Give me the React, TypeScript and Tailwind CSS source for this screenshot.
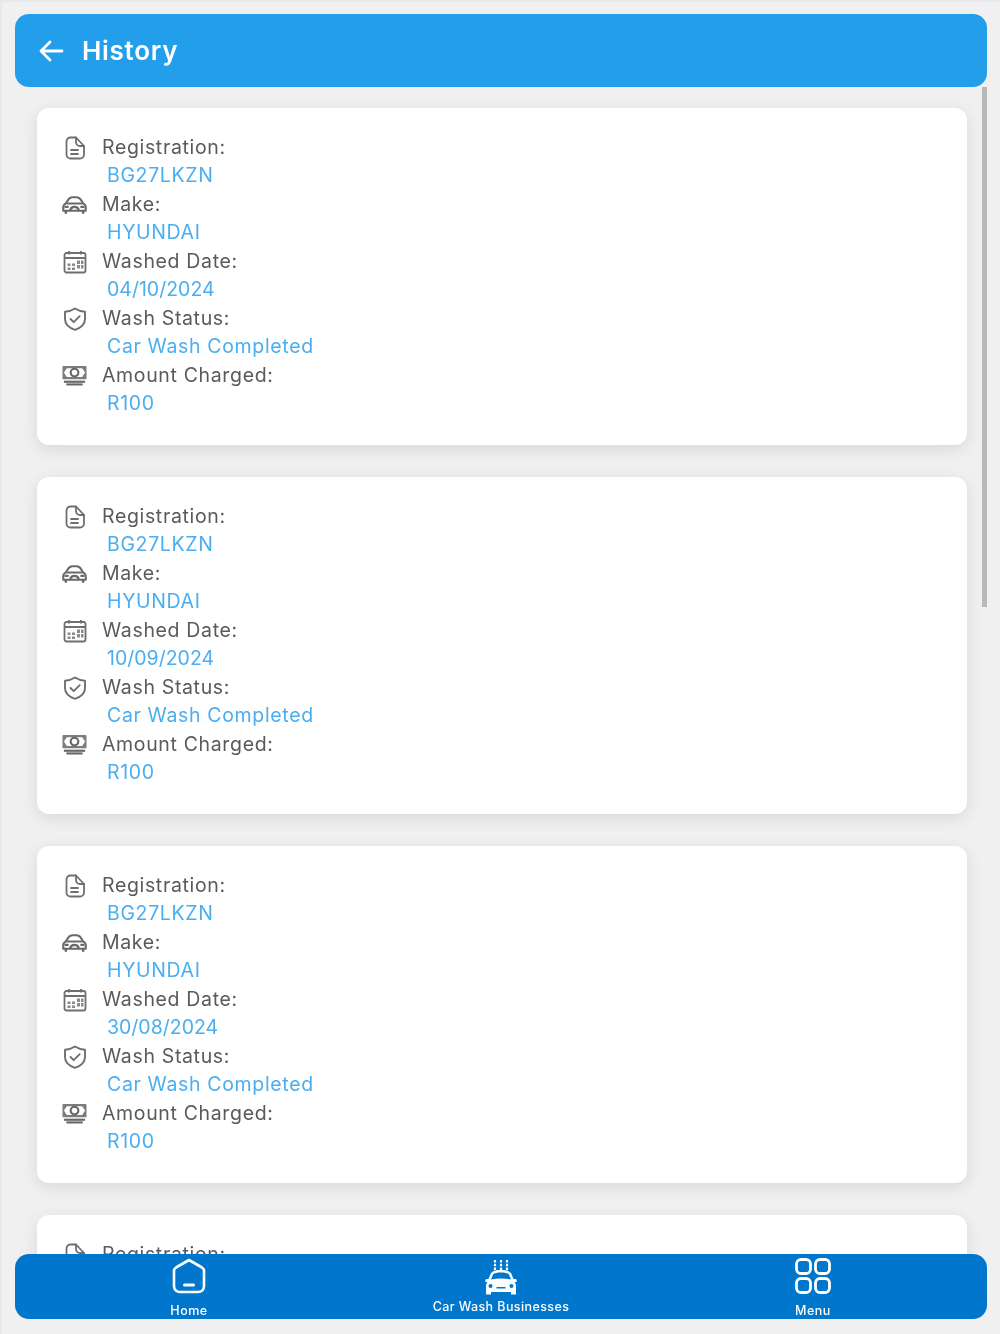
import { ReactNode } from "react";

const font = "font-['Inter','Liberation_Sans',sans-serif]";

function DocIcon() {
  return (
    <svg width="22" height="24" viewBox="0 0 22 24" fill="none" stroke="#6f6f6f" strokeWidth="1.8" strokeLinejoin="round" strokeLinecap="round">
      <path d="M6.500 1.500h5.500l8 8.500v8.500a4 4 0 0 1-4 4h-9.500a4 4 0 0 1-4-4v-13a4 4 0 0 1 4-4z" />
      <path d="M12 1.500v4.500a4 4 0 0 0 4 4h4" />
      <path d="M7 14h7M7 18h7" />
    </svg>
  );
}

function CarIcon() {
  return (
    <svg width="26" height="18" viewBox="0 0 26 18" fill="none" stroke="#6a6a6a" strokeWidth="2.200" strokeLinejoin="round" strokeLinecap="round">
      <path d="M2.500 8.500c1.500-.8 2.300-2 3-3.500 1.200-2.500 3-3.800 5-4h5c2 .2 3.800 1.500 5 4 .7 1.500 1.500 2.700 3 3.500 .8.600 1.200 1.500 1.200 2.800v3.700h-23.400v-3.700c0-1.300.4-2.200 1.200-2.800z" />
      <path d="M5.500 7.500h15" />
      <path d="M8.500 14.500c.5-2.200 2-3.500 4.500-3.500s4 1.300 4.500 3.500" />
      <path d="M3.500 11h2.500M20 11h2.500" />
      <path d="M4 15.500v1.500M22 15.500v1.500" strokeWidth="2.600" />
    </svg>
  );
}

function CalendarIcon() {
  return (
    <svg width="24" height="24" viewBox="0 0 24 24" fill="none" stroke="#6f6f6f" strokeWidth="1.800" strokeLinejoin="round">
      <rect x="1.500" y="3" width="21" height="19.500" rx="2" />
      <path d="M1.500 8h21M6 1v3.500M18 1v3.500" />
      <path d="M4.500 13.500h3v2.500h-3zM9 13.500h3v2.500h-3zM4.500 17.500h3v2.500h-3zM9 17.500h3v2.500h-3zM14 10.500h3v3.500h-3zM18 10.500h2.500v3.500h-2.500zM14 15h3v3.500h-3zM18 15h2.500v3.500h-2.500z" fill="#8a8a8a" stroke="none" />
    </svg>
  );
}

function ShieldIcon() {
  return (
    <svg width="24" height="24" viewBox="0 0 24 24" fill="none" stroke="#6f6f6f" strokeWidth="1.900" strokeLinejoin="round" strokeLinecap="round">
      <path d="M12 1.500c3 2 6 3 10 3.200v7.300c0 5-4 8.800-10 10.800-6-2-10-5.800-10-10.800v-7.300c4-.2 7-1.200 10-3.200z" />
      <path d="M7.500 12l3.200 3.200 6-6" />
    </svg>
  );
}

function MoneyIcon() {
  return (
    <svg width="26" height="21" viewBox="0 0 26 21" fill="none" stroke="#666666" strokeLinejoin="round">
      <rect x="0.500" y="0.500" width="25" height="14" rx="1" fill="#7d7d7d" stroke="none" />
      <path d="M5 3h16l3 4.500-3 4.500h-16l-3-4.500z" fill="#ffffff" stroke="none" />
      <ellipse cx="13" cy="7.500" rx="4" ry="4" strokeWidth="2.200" />
      <path d="M2 17h22" strokeWidth="2.200" />
      <path d="M4.500 19.800h17" strokeWidth="2.200" />
    </svg>
  );
}

function HomeIcon() {
  return (
    <svg width="36" height="36" viewBox="0 0 36 36" fill="none" stroke="#ffffff" strokeWidth="2.600" strokeLinejoin="round" strokeLinecap="round">
      <path d="M18 2l13 7.500c1.500 1 2 2 2 3.500v15c0 3.500-2.500 6-6 6h-18c-3.500 0-6-2.500-6-6v-15c0-1.500.5-2.500 2-3.500z" />
      <path d="M13.500 27h9" strokeWidth="3" />
    </svg>
  );
}

function WashIcon() {
  return (
    <svg width="34" height="36" viewBox="0 0 34 36" fill="#ffffff">
      <g stroke="#ffffff" strokeWidth="2.200" strokeDasharray="2.500 1.200">
        <path d="M11 0v11M17 0v11M23 0v11" fill="none" />
      </g>
      <path d="M17 10c4 0 8 .5 10 3l2.500 6h2.500l1 2.500-2.500 1c1 1 1.500 2 1.500 3.500v8.500h-5v-2.500h-20v2.500h-5v-8.500c0-1.500.5-2.500 1.500-3.500l-2.500-1 1-2.500h2.500l2.500-6c2-2.500 6-3 10-3z" />
      <path d="M17 12.500c3.500 0 6.500.4 8 2l2 5c-6.500-1.500-13.500-1.500-20 0l2-5c1.500-1.600 4.500-2 8-2z" fill="#0077cc" />
      <circle cx="6.500" cy="26" r="2" fill="#0077cc" />
      <circle cx="27.500" cy="26" r="2" fill="#0077cc" />
      <path d="M12.500 27h9v1.500h-9z" fill="#0077cc" />
    </svg>
  );
}

function MenuIcon() {
  return (
    <svg width="36" height="36" viewBox="0 0 36 36" fill="none" stroke="#ffffff" strokeWidth="2.800">
      <rect x="1.500" y="1.500" width="14" height="14" rx="4.500" />
      <rect x="20.500" y="1.500" width="14" height="14" rx="4.500" />
      <rect x="1.500" y="20.500" width="14" height="14" rx="4.500" />
      <rect x="20.500" y="20.500" width="14" height="14" rx="4.500" />
    </svg>
  );
}

function Label({ icon, label }: { icon: ReactNode; label: string }) {
  return (
    <div className="flex h-[28.5px] items-center">
      <div className="flex w-[25px] justify-center">{icon}</div>
      <span className="ml-[15px] text-[19.500px] tracking-[0.65px] text-[#5a5a5a]">{label}</span>
    </div>
  );
}

function Field({ icon, label, value, date }: { icon: ReactNode; label: string; value: string; date?: boolean }) {
  return (
    <div>
      <Label icon={icon} label={label} />
      <div className={`flex h-[28.5px] items-center pl-[45px] text-[19.500px] text-[#4aaef0] ${date ? "tracking-normal" : "tracking-[0.65px]"}`}>{value}</div>
    </div>
  );
}

function WashCard({ date }: { date: string }) {
  return (
    <div className="h-[337px] shrink-0 rounded-[12px] bg-white pl-[25px] pt-[25.25px] shadow-[0_4px_16px_rgba(0,0,0,0.1)]">
      <Field icon={<DocIcon />} label="Registration:" value="BG27LKZN" />
      <Field icon={<CarIcon />} label="Make:" value="HYUNDAI" />
      <Field icon={<CalendarIcon />} label="Washed Date:" value={date} date />
      <Field icon={<ShieldIcon />} label="Wash Status:" value="Car Wash Completed" />
      <Field icon={<MoneyIcon />} label="Amount Charged:" value="R100" />
    </div>
  );
}

function NavItem({ icon, label, labelClass }: { icon: ReactNode; label: string; labelClass: string }) {
  return (
    <div className="flex flex-col items-center text-white">
      {icon}
      <span className={labelClass}>{label}</span>
    </div>
  );
}

export default function App() {
  return (
    <div className={`${font} relative h-[1334px] w-[1000px] overflow-hidden border-l-2 border-t-2 border-[#e6e8ee] bg-[#f0f0f0] blur-[0.4px]`}>
      <header className="ml-[13px] mt-[12px] flex h-[73px] w-[972px] items-center rounded-[14px] bg-[#239eea] pl-[23px] text-white">
        <svg width="26" height="24" viewBox="0 0 26 24" fill="none" stroke="#ffffff" strokeWidth="2.800" strokeLinecap="round" strokeLinejoin="round">
          <path d="M24 12h-21M12 3l-9 9 9 9" />
        </svg>
        <h1 className="ml-[18px] text-[26px] font-semibold tracking-[0.7px]">History</h1>
      </header>

      <div className="relative h-[1190px] overflow-hidden">
        <main className="ml-[35px] flex w-[930px] flex-col gap-[32px] pt-[21px]">
          <WashCard date="04/10/2024" />
          <WashCard date="10/09/2024" />
          <WashCard date="30/08/2024" />
          {/* the fourth card scrolls away under the bottom bar, only its first row shows */}
          <div className="h-[337px] shrink-0 rounded-[12px] bg-white pl-[25px] pt-[25.25px] shadow-[0_4px_16px_rgba(0,0,0,0.1)]">
            <Label icon={<DocIcon />} label="Registration:" />
          </div>
        </main>
        <div className="absolute left-[980px] top-0 h-[520px] w-[5px] bg-[#b8b8b8]" />
      </div>

      <nav className="absolute left-[13px] top-[1252px] grid h-[65px] w-[972px] grid-cols-3 rounded-[14px] bg-[#0077cc] px-[18px]">
        <NavItem icon={<div className="mt-[4px]"><HomeIcon /></div>} label="Home" labelClass="mt-[9px] text-[12.500px] font-medium leading-[15px] tracking-[0.5px]" />
        <NavItem icon={<div className="mt-[6px]"><WashIcon /></div>} label="Car Wash Businesses" labelClass="mt-[3px] text-[12.500px] font-medium leading-[15px] tracking-[0.4px]" />
        <NavItem icon={<div className="mt-[4px]"><MenuIcon /></div>} label="Menu" labelClass="mt-[9px] text-[12.500px] font-medium leading-[15px] tracking-[0.5px]" />
      </nav>
    </div>
  );
}
